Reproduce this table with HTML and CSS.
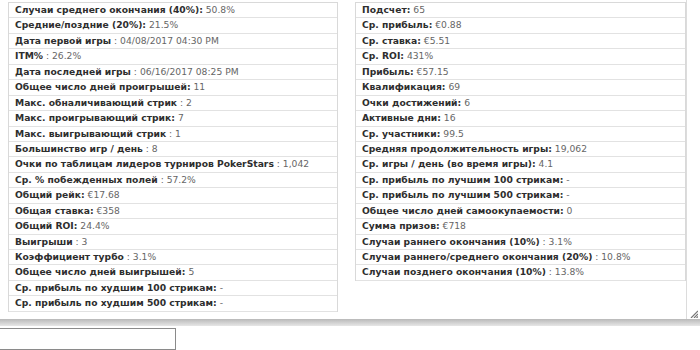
FILE: index.html
```html
<!DOCTYPE html>
<html>
<head>
<meta charset="utf-8">
<link rel="stylesheet" href="styles.css">
</head>
<body>
<div class="window">
  <div class="panel">
    <div class="stats stats-left">
      <div class="row"><b>Случаи среднего окончания (40%):</b> <span>50.8%</span></div>
      <div class="row"><b>Средние/поздние (20%):</b> <span>21.5%</span></div>
      <div class="row"><b>Дата первой игры</b> <span>: 04/08/2017 04:30 PM</span></div>
      <div class="row"><b>ITM%</b> <span>: 26.2%</span></div>
      <div class="row"><b>Дата последней игры</b> <span>: 06/16/2017 08:25 PM</span></div>
      <div class="row"><b>Общее число дней проигрышей:</b> <span>11</span></div>
      <div class="row"><b>Макс. обналичивающий стрик</b> <span>: 2</span></div>
      <div class="row"><b>Макс. проигрывающий стрик:</b> <span>7</span></div>
      <div class="row"><b>Макс. выигрывающий стрик</b> <span>: 1</span></div>
      <div class="row"><b>Большинство игр / день</b> <span>: 8</span></div>
      <div class="row"><b>Очки по таблицам лидеров турниров PokerStars</b> <span>: 1,042</span></div>
      <div class="row"><b>Ср. % побежденных полей</b> <span>: 57.2%</span></div>
      <div class="row"><b>Общий рейк:</b> <span>€17.68</span></div>
      <div class="row"><b>Общая ставка:</b> <span>€358</span></div>
      <div class="row"><b>Общий ROI:</b> <span>24.4%</span></div>
      <div class="row"><b>Выигрыши</b> <span>: 3</span></div>
      <div class="row"><b>Коэффициент турбо</b> <span>: 3.1%</span></div>
      <div class="row"><b>Общее число дней выигрышей:</b> <span>5</span></div>
      <div class="row"><b>Ср. прибыль по худшим 100 стрикам:</b> <span>-</span></div>
      <div class="row"><b>Ср. прибыль по худшим 500 стрикам:</b> <span>-</span></div>
    </div>
    <div class="stats stats-right">
      <div class="row"><b>Подсчет:</b> <span>65</span></div>
      <div class="row"><b>Ср. прибыль:</b> <span>€0.88</span></div>
      <div class="row"><b>Ср. ставка:</b> <span>€5.51</span></div>
      <div class="row"><b>Ср. ROI:</b> <span>431%</span></div>
      <div class="row"><b>Прибыль:</b> <span>€57.15</span></div>
      <div class="row"><b>Квалификация:</b> <span>69</span></div>
      <div class="row"><b>Очки достижений:</b> <span>6</span></div>
      <div class="row"><b>Активные дни:</b> <span>16</span></div>
      <div class="row"><b>Ср. участники:</b> <span>99.5</span></div>
      <div class="row"><b>Средняя продолжительность игры:</b> <span>19,062</span></div>
      <div class="row"><b>Ср. игры / день (во время игры):</b> <span>4.1</span></div>
      <div class="row"><b>Ср. прибыль по лучшим 100 стрикам:</b> <span>-</span></div>
      <div class="row"><b>Ср. прибыль по лучшим 500 стрикам:</b> <span>-</span></div>
      <div class="row"><b>Общее число дней самоокупаемости:</b> <span>0</span></div>
      <div class="row"><b>Сумма призов:</b> <span>€718</span></div>
      <div class="row"><b>Случаи раннего окончания (10%)</b> <span>: 3.1%</span></div>
      <div class="row"><b>Случаи раннего/среднего окончания (20%)</b> <span>: 10.8%</span></div>
      <div class="row"><b>Случаи позднего окончания (10%)</b> <span>: 13.8%</span></div>
    </div>
    <svg class="grip" width="8" height="8" viewBox="0 0 8 8">
      <path d="M8 1 L1 8 M8 4 L4 8 M8 6.5 L6.5 8" stroke="#777" stroke-width="1.2"/>
    </svg>
  </div>
  <div class="shadow"></div>
  <div class="below"><div class="box"></div></div>
</div>
</body>
</html>
```
FILE: styles.css
```css
html, body {
  margin: 0;
  padding: 0;
  background: #fff;
}
.window {
  width: 700px;
  height: 350px;
  overflow: hidden;
  display: flex;
  flex-direction: column;
}
.panel {
  position: relative;
  height: 338px;
  width: 687px;
  border-right: 1px solid #dcdcdc;
  box-sizing: border-box;
  display: flex;
  align-items: flex-start;
  gap: 17px;
  padding: 2px 0 0 8px;
  font-family: "DejaVu Sans", Verdana, sans-serif;
  font-size: 9.2px;
}
.stats {
  border: 1px solid #d9d9d9;
  border-bottom: none;
  box-sizing: border-box;
}
.stats-left { width: 330px; }
.stats-right { width: 331px; }
.row {
  height: 14.45px;
  line-height: 14.45px;
  border-bottom: 1px solid #e2e2e2;
  padding-left: 6px;
  white-space: nowrap;
  overflow: hidden;
}
.row b {
  color: #2e2e2e;
  font-weight: bold;
}
.row span {
  color: #666;
}
.grip {
  position: absolute;
  right: -12px;
  bottom: 1px;
}
.shadow {
  height: 7px;
  background: linear-gradient(#b9b9b9, #e6e6e6);
}
.below {
  flex: 1;
  padding-top: 2px;
}
.box {
  width: 175px;
  height: 20px;
  border: 1px solid #8a8a8a;
  border-left: none;
}
```
